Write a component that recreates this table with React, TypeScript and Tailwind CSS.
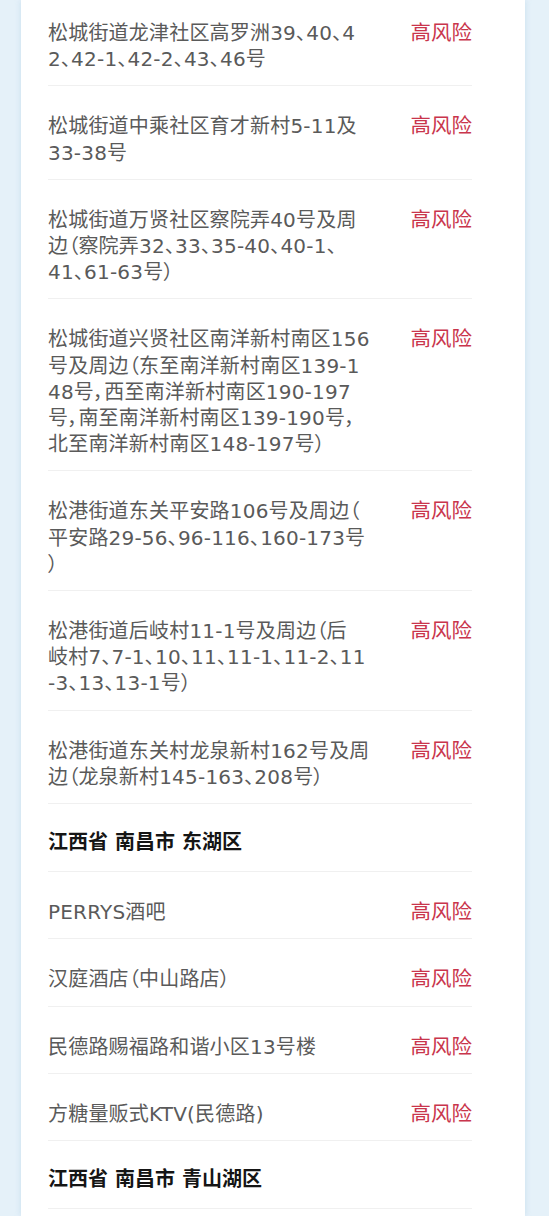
import React from 'react';

type Row =
  | { kind: 'area'; name: string }
  | { kind: 'place'; lines: string[] };

const rows: Row[] = [
  { kind: 'place', lines: ['松城街道龙津社区高罗洲39、40、4', '2、42-1、42-2、43、46号'] },
  { kind: 'place', lines: ['松城街道中乘社区育才新村5-11及', '33-38号'] },
  {
    kind: 'place',
    lines: ['松城街道万贤社区察院弄40号及周', '边（察院弄32、33、35-40、40-1、', '41、61-63号）'],
  },
  {
    kind: 'place',
    lines: [
      '松城街道兴贤社区南洋新村南区156',
      '号及周边（东至南洋新村南区139-1',
      '48号，西至南洋新村南区190-197',
      '号，南至南洋新村南区139-190号，',
      '北至南洋新村南区148-197号）',
    ],
  },
  { kind: 'place', lines: ['松港街道东关平安路106号及周边（', '平安路29-56、96-116、160-173号', '）'] },
  {
    kind: 'place',
    lines: ['松港街道后岐村11-1号及周边（后', '岐村7、7-1、10、11、11-1、11-2、11', '-3、13、13-1号）'],
  },
  { kind: 'place', lines: ['松港街道东关村龙泉新村162号及周', '边（龙泉新村145-163、208号）'] },
  { kind: 'area', name: '江西省 南昌市 东湖区' },
  { kind: 'place', lines: ['PERRYS酒吧'] },
  { kind: 'place', lines: ['汉庭酒店（中山路店）'] },
  { kind: 'place', lines: ['民德路赐福路和谐小区13号楼'] },
  { kind: 'place', lines: ['方糖量贩式KTV(民德路)'] },
  { kind: 'area', name: '江西省 南昌市 青山湖区' },
];

const font = { fontFamily: '"DejaVu Sans", "Noto Sans CJK SC", sans-serif' };

export default function App() {
  return (
    <div className="h-[1216px] flex bg-[#e5f1f9] pl-[21px] pr-[24px] overflow-hidden" style={font}>
      <div className="flex-1 bg-white pl-[27px] pr-[53px] shadow-[0_0_6px_rgba(150,190,220,0.35)]">
        <div className="-mt-[7px]">
          {rows.map((row, i) =>
            row.kind === 'area' ? (
              <div
                key={i}
                className="pt-[25px] pb-[16px] border-b border-[#f0f0f0] text-[20px] leading-[26.2px] font-bold text-[#151515]"
              >
                {row.name}
              </div>
            ) : (
              <div
                key={i}
                className="flex justify-between items-start pt-[27px] pb-[13px] border-b border-[#f0f0f0]"
              >
                <div className="text-[20px] leading-[26.2px] text-[#5a5a5a] whitespace-nowrap [font-feature-settings:'palt'] tracking-[0.2px]">
                  {row.lines.map((l, j) => (
                    <div key={j}>{l}</div>
                  ))}
                </div>
                <div className="shrink-0 text-[20.5px] leading-[26.2px] text-[#c9354c]">高风险</div>
              </div>
            )
          )}
        </div>
      </div>
    </div>
  );
}
